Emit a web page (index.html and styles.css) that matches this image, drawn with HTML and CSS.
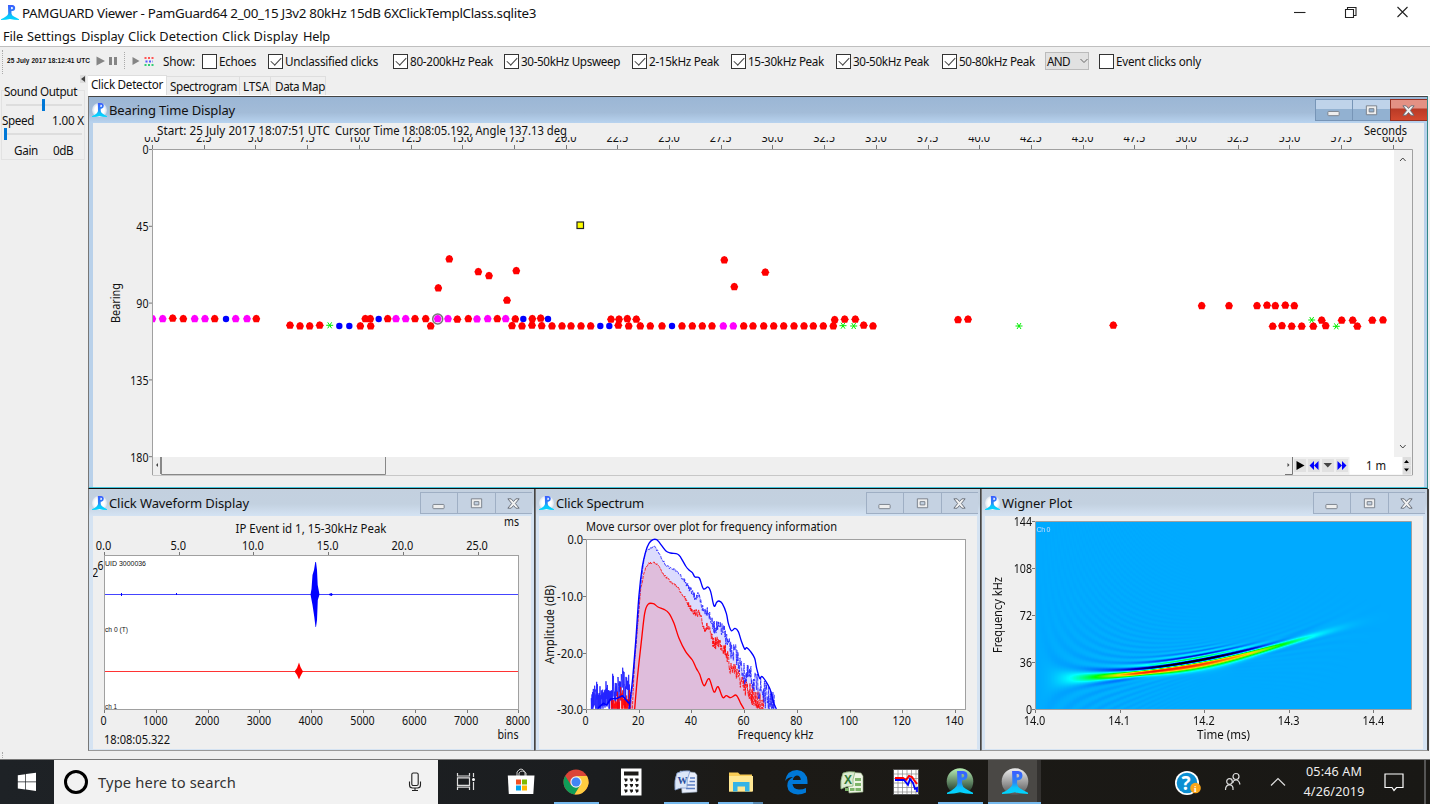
FILE: index.html
```html
<!DOCTYPE html>
<html lang="en">
<head>
<meta charset="utf-8">
<title>PAMGUARD Viewer</title>
<link rel="stylesheet" href="styles.css">
</head>
<body>
<svg class="defs" width="0" height="0" aria-hidden="true">
  <defs>
    <linearGradient id="pg" x1="0" y1="0" x2="0" y2="1"><stop offset="0" stop-color="#3a5cff"/><stop offset=".5" stop-color="#2a86f6"/><stop offset=".72" stop-color="#0cc4fb"/><stop offset="1" stop-color="#00d8ff"/></linearGradient>
    <linearGradient id="greenBall" x1="0" y1="0" x2="0" y2="1"><stop offset="0" stop-color="#b8f0b4"/><stop offset="1" stop-color="#10231a"/></linearGradient>
    <linearGradient id="grayBall" x1="0" y1="0" x2="0" y2="1"><stop offset="0" stop-color="#eee"/><stop offset="1" stop-color="#555"/></linearGradient>
    <symbol id="pam" viewBox="0 0 16 16" preserveAspectRatio="none"><path fill="url(#pg)" fill-rule="evenodd" d="M6.200 0H10Q12.600 .3 12.600 3.200T10 6.500H9.300V9Q9.500 11 11.500 12.300Q13.500 13.600 16 15.200V16Q11.500 15.900 8 14.800Q4.500 15.900 0 16V15.200Q6 12 6.400 9ZM9 2V4.600H9.800Q10.700 4.300 10.600 3.200T9.800 2Z"/></symbol>
    <symbol id="min" viewBox="0 0 16 16"><rect x="2" y="9" width="12" height="4.500" rx=".8" fill="#eee" stroke="#777f89"/></symbol>
    <symbol id="max" viewBox="0 0 16 16"><path fill="#eee" fill-rule="evenodd" stroke="#777f89" d="M2.500 3H13.500V12.500H2.500ZM5.500 6V9.500H10.500V6Z"/></symbol>
    <symbol id="cls" viewBox="0 0 16 16"><path fill="#f2f2f2" stroke="#646b75" stroke-linejoin="round" d="M2 3H5.500L8 5.800L10.500 3H14L10 8L14 13H10.500L8 10.200L5.500 13H2L6 8Z"/></symbol>
  </defs>
</svg>

<header class="titlebar">
  <svg class="app-icon" viewBox="0 0 18 15"><use href="#pam" width="18" height="15"/></svg>
  <span class="app-title" data-w="514">PAMGUARD Viewer - PamGuard64 2_00_15 J3v2 80kHz 15dB 6XClickTemplClass.sqlite3</span>
  <svg class="win-controls" viewBox="0 0 130 24" fill="none" stroke="#222" stroke-width="1.100"><path d="M4 11.500H15.500"/><path d="M55.500 8.500H63.500V16.500H55.500ZM57.500 8V6.500H66V14.500H64"/><path d="M107.500 6L117.500 16M117.500 6L107.500 16"/></svg>
</header>
<nav class="menubar">
  <span data-w="20">File</span><span data-w="49">Settings</span><span data-w="43">Display</span><span data-w="90">Click Detection</span><span data-w="76">Click Display</span><span data-w="27">Help</span>
</nav>

<section class="toolbar">
  <i class="grip"></i>
  <span class="stamp" data-w="83">25 July 2017 18:12:41 UTC</span>
  <svg class="play" viewBox="0 0 80 20"><path fill="#858585" d="M4.500 5.500L13 10L4.500 14.500ZM17 6H20V14H17ZM22 6H25V14H22ZM40.500 6L47.500 10L40.500 14Z"/><path stroke="#aaa" stroke-dasharray="1 1" d="M32.500 1V19"/><g stroke-width="2" stroke-dasharray="2 1.500"><path stroke="#f55" d="M52.500 7H62"/><path stroke="#55f" d="M53.500 10.500H61"/><path stroke="#3c7" d="M52.500 14H62"/></g></svg>
  <span class="show" data-w="32">Show:</span>
  <div class="filters">
    <label><i class="box"></i><span data-w="37">Echoes</span></label>
    <label><i class="box on"></i><span data-w="93">Unclassified clicks</span></label>
    <label><i class="box on"></i><span data-w="83">80-200kHz Peak</span></label>
    <label><i class="box on"></i><span data-w="99">30-50kHz Upsweep</span></label>
    <label><i class="box on"></i><span data-w="70">2-15kHz Peak</span></label>
    <label><i class="box on"></i><span data-w="76">15-30kHz Peak</span></label>
    <label><i class="box on"></i><span data-w="76">30-50kHz Peak</span></label>
    <label><i class="box on"></i><span data-w="76">50-80kHz Peak</span></label>
    <div class="combo"><span data-w="23">AND</span><svg viewBox="0 0 8 6"><path d="M.5 1L4 4.500L7.500 1" fill="none" stroke="#666"/></svg></div>
    <label><i class="box"></i><span data-w="85">Event clicks only</span></label>
  </div>
</section>

<main class="body">
  <aside class="side">
    <svg class="collapse" viewBox="0 0 6 8"><rect width="6" height="8" fill="#ddd"/><path d="M5 1L1 4L5 7Z" fill="#444"/></svg>
    <fieldset class="sound">
      <div class="legend"><span data-w="73">Sound Output</span></div>
      <div class="slider mid"><i></i></div>
      <div class="pair"><span data-w="32">Speed</span><span data-w="32">1.00 X</span></div>
      <div class="slider low"><i></i></div>
      <div class="pair gain"><span data-w="24">Gain</span><span data-w="20">0dB</span></div>
    </fieldset>
  </aside>
  <div class="work">
    <div class="tabs"><span class="tab on"><b data-w="72">Click Detector</b></span><span class="tab t2"><b data-w="67">Spectrogram</b></span><span class="tab t3"><b data-w="26">LTSA</b></span><span class="tab t4"><b data-w="50">Data Map</b></span></div>
    <div class="desktop">
      <section class="frame active">
        <div class="caption"><svg class="cap-icon" viewBox="0 0 15 14"><use href="#pam" width="15" height="14"/></svg><span data-w="126">Bearing Time Display</span><div class="btns"><i><svg><use href="#min"/></svg></i><i><svg><use href="#max"/></svg></i><i class="red"><svg><use href="#cls"/></svg></i></div></div>
        <svg class="plot" id="bearing" viewBox="93 123 1331 364"></svg>
      </section>
      <div class="row">
        <section class="frame">
          <div class="caption"><svg class="cap-icon" viewBox="0 0 15 14"><use href="#pam" width="15" height="14"/></svg><span data-w="140">Click Waveform Display</span><div class="btns"><i><svg><use href="#min"/></svg></i><i><svg><use href="#max"/></svg></i><i><svg><use href="#cls"/></svg></i></div></div>
          <svg class="plot" id="wave" viewBox="93 516 438 233"></svg>
        </section>
        <section class="frame">
          <div class="caption"><svg class="cap-icon" viewBox="0 0 15 14"><use href="#pam" width="15" height="14"/></svg><span data-w="88">Click Spectrum</span><div class="btns"><i><svg><use href="#min"/></svg></i><i><svg><use href="#max"/></svg></i><i><svg><use href="#cls"/></svg></i></div></div>
          <svg class="plot" id="spectrum" viewBox="539 516 438 233"></svg>
        </section>
        <section class="frame last">
          <div class="caption"><svg class="cap-icon" viewBox="0 0 15 14"><use href="#pam" width="15" height="14"/></svg><span data-w="70">Wigner Plot</span><div class="btns"><i><svg><use href="#min"/></svg></i><i><svg><use href="#max"/></svg></i><i><svg><use href="#cls"/></svg></i></div></div>
          <div class="plot wig"><canvas id="wigner" width="376" height="187"></canvas><svg id="wigaxes" viewBox="985 516 438 233"></svg></div>
        </section>
      </div>
    </div>
  </div>
</main>
<div class="status"><i class="grip"></i></div>

<footer class="taskbar">
  <div class="start"><svg viewBox="0 0 20 20"><path fill="#fff" d="M.8 3.300L8.300 2.200V9.500H.8ZM9 2.100L19 .7V9.500H9ZM.8 10.200H8.300V17.500L.8 16.400ZM9 10.200H19V19L9 17.600Z"/></svg></div>
  <div class="search"><i class="ring"></i><span data-w="138">Type here to search</span><svg viewBox="0 0 14 20" fill="none" stroke="#222" stroke-width="1.100"><rect x="3.800" y="1" width="6.400" height="12.500" rx="1.500"/><path d="M1.500 9.500V13Q1.500 16 4.500 16H9.500Q12.500 16 12.500 13V9.500M7 16V18.500M4 18.500H10"/></svg></div>
  <div class="apps">
    <i><svg viewBox="0 0 28 28" fill="none" stroke="#ddd" stroke-width="1.200"><path d="M5.500 5V8H17.500V5M5.500 22V19.200H17.500V22M5.500 9.800H17.500V17.300H5.500ZM21.500 5V9M21.500 14V22"/><circle cx="21.500" cy="11.500" r="1.500" fill="#fff" stroke="none"/></svg></i>
    <i><svg viewBox="0 0 28 28"><path d="M10 8V4Q14 -2 18 4V8M12 8V5Q15 1 19 5V8" fill="none" stroke="#ccc"/><path fill="#fff" d="M.8 7.500H27.500L26.300 26H1.800Z"/><path fill="#f25022" d="M9 11.500H14V16.500H9Z"/><path fill="#7fba00" d="M15 11.500H20V16.500H15Z"/><path fill="#00a4ef" d="M9 17.500H14V22.500H9Z"/><path fill="#ffb900" d="M15 17.500H20V22.500H15Z"/></svg></i>
    <i class="run"><svg viewBox="0 0 28 28"><circle cx="14" cy="14" r="12.500" fill="#db4437"/><path fill="#0f9d58" d="M3.200 7.700A12.500 12.500 0 0 0 12.500 26.400L18.500 17.500 9 17Z"/><path fill="#ffcd40" d="M14 8H25A12.500 12.500 0 0 1 12.500 26.400L19 16Z"/><circle cx="14" cy="14" r="5.700" fill="#f1f1f1"/><circle cx="14" cy="14" r="4.500" fill="#4285f4"/></svg></i>
    <i><svg viewBox="0 0 28 28"><path fill="#fff" d="M4 .5H24.500V27.500H4Z"/><path fill="#1c1a18" d="M7 3.500H21.500V7.500H7Z"/><g fill="#1c1a18"><path id="k" d="M7 10.500H10.500V12.500L8.500 14Z"/><use href="#k" x="5.500"/><use href="#k" x="11"/><use href="#k" y="5.500"/><use href="#k" x="5.500" y="5.500"/><use href="#k" x="11" y="5.500"/><use href="#k" y="11"/><use href="#k" x="5.500" y="11"/><use href="#k" x="11" y="11"/></g></svg></i>
    <i class="run"><svg viewBox="0 0 28 28"><path fill="#e9eefb" stroke="#89a" stroke-width=".6" d="M8 3L23 4.500 25 7V24L10 25Z"/><path stroke="#5b7fc4" stroke-width="1.400" d="M18 10H23M17.500 13.500H23M14 17H23M14 20.500H23"/><path fill="#dce7f8" stroke="#7d99cc" stroke-width=".8" d="M5 5Q12 2 18 3Q14 12 15 20Q9 19 3 22Q2 12 5 5Z"/><text x="5.500" y="15.500" class="word">W</text></svg></i>
    <i class="run two"><svg viewBox="0 0 28 28"><path fill="#f8cc56" d="M2 4.500H11L13 6.500H25V23.500H2Z"/><path fill="#ffe793" d="M2 8H26V23.500H2Z"/><path fill="#35b3e6" d="M6 14H22.500V23.500H18V18.500H10.500V23.500H6Z"/></svg></i>
    <i><svg viewBox="0 0 28 28"><path fill="#0078d7" fill-rule="evenodd" d="M3 13Q5 2 15 2Q25 3 25.500 13V16H10.500Q11 21 17 21.500Q21 21.500 24 20V24.500Q20 26.500 16 26.500Q6 26 5.300 18Q5 12 11 9Q6 9 3 13ZM10.800 12H18.800Q18.500 7.500 14.800 7.500Q11.500 8 10.800 12Z"/></svg></i>
    <i><svg viewBox="0 0 28 28"><path fill="#edf4e4" stroke="#8ba679" stroke-width=".6" d="M9 4L24 5 26 8V24L12 25Z"/><g fill="#7eb46a"><path d="M18 10H24V13H18ZM18 15H24V18H18ZM8 20H12V23H8ZM13 20H17.500V23H13ZM18.500 20H24V23H18.500Z"/></g><path fill="#dcebd1" stroke="#8db27b" stroke-width=".8" d="M6 5Q12 3 18 4Q15 12 16 18Q9 18 4 21Q3 12 6 5Z"/><text x="7" y="16" class="excel">X</text></svg></i>
    <i><svg viewBox="0 0 28 28"><path fill="#fff" stroke="#555" d="M1.500 1.500H26.500V26.500H1.500Z"/><path stroke="#888" stroke-width=".7" d="M6 2V26M10.500 2V26M15 2V26M19.500 2V26M24 2V26M2 6H26M2 10.500H26M2 15H26M2 19.500H26M2 24H26"/><path fill="none" stroke="red" stroke-width="2" d="M3 10L11 10 14 12 17 8 20 9 22 12 25 16"/><path fill="none" stroke="#00f" stroke-width="1.800" d="M3 12L12 12 16 17 18 11 21 15 23 21 25 20V24"/></svg></i>
    <i class="run"><svg viewBox="0 0 28 28"><circle cx="14" cy="13.500" r="13.300" fill="url(#greenBall)"/><use href="#pam" x="1" y="3" width="26" height="23"/></svg></i>
    <i class="run sel"><svg viewBox="0 0 28 28"><circle cx="14" cy="13.500" r="13.300" fill="url(#grayBall)"/><use href="#pam" x="1" y="3" width="26" height="23"/></svg></i>
  </div>
  <div class="tray">
    <svg class="help" viewBox="0 0 28 28"><circle cx="13" cy="13" r="12" fill="#fff"/><circle cx="13" cy="13" r="10.300" fill="#0c8fd2"/><text x="7.500" y="20" class="q">?</text><circle cx="21.500" cy="18" r="5.300" fill="#f9a51a"/><text x="19.900" y="21.500" class="inf">i</text></svg>
    <svg class="people" viewBox="0 0 20 20" fill="none" stroke="#ddd" stroke-width="1.200"><circle cx="13" cy="4.500" r="3"/><path d="M9.800 11Q10 8 13 8T17 12.500"/><circle cx="6.500" cy="9.500" r="2.800"/><path d="M2.500 18Q2.500 12.800 6.500 12.800T10 18"/></svg>
    <svg class="chev" viewBox="0 0 16 10" fill="none" stroke="#ddd" stroke-width="1.200"><path d="M1 8.500L8 1.500L15 8.500"/></svg>
    <div class="clock"><span data-w="56">05:46 AM</span><span data-w="61">4/26/2019</span></div>
    <svg class="note" viewBox="0 0 20 20" fill="none" stroke="#fff" stroke-width="1.200"><path d="M1 2H19V15.500H12.500L10 18.500L8 15.500H1Z"/></svg>
    <i class="peek"></i>
  </div>
</footer>
<script src="plots.js"></script>
</body>
</html>
```
FILE: styles.css
```css
* { box-sizing: border-box; }
body { margin: 0; width: 1430px; height: 804px; overflow: hidden; display: flex; flex-direction: column; background: #efefef; color: #111; font: 11.700px/16px "Noto Sans", sans-serif; }
i, b { font-style: normal; font-weight: normal; }
svg { display: block; overflow: visible; }
span, b { white-space: nowrap; }
.defs { position: absolute; }
.titlebar { height: 26px; flex: none; background: #fff; display: flex; align-items: center; }
.app-icon { width: 18px; height: 15px; margin: 0 3px 2px 1px; }
.app-title { font-size: 13.400px; line-height: 26px; }
.win-controls { width: 130px; height: 24px; margin-left: auto; margin-right: 10px; }
.menubar { height: 21px; flex: none; background: #fff; border-bottom: 1px solid #bfbfbf; padding-left: 3px; display: grid; grid-template-columns: 24px 54px 47px 94px 81px 40px; font-size: 12.800px; line-height: 21px; }

.toolbar { height: 28px; flex: none; display: flex; align-items: center; }
.grip { flex: none; width: 2px; height: 24px; margin: 1px 3px 0 2px; border-left: 1px dotted #aaa; }
.stamp { font: bold 6.500px/16px "Liberation Sans", sans-serif; }
.play { flex: none; width: 80px; height: 20px; margin-left: 2px; margin-right: -9px; }
.show { flex: none; }
.filters { display: grid; margin-left: 7px; grid-template-columns: 66px 125px 111px 128px 99px 105px 106px 103px 54px 110px; align-items: center; }
.filters label { display: flex; align-items: center; gap: 2px; }
.box { width: 15px; height: 15px; background: #fff; border: 1px solid #333; display: flex; justify-content: center; }
.box.on::after { content: ""; width: 9px; height: 5px; margin-top: 2px; border: solid #444; border-width: 0 0 1.200px 1.200px; transform: rotate(-47deg); }
.combo { width: 44px; height: 18px; border: 1px solid #bbb; background: #e1e1e1; display: flex; align-items: center; padding-left: 1px; }
.combo svg { width: 8px; height: 6px; margin-left: 10px; }

.body { flex: none; height: 676px; display: flex; }
.side { width: 88px; display: flex; flex-direction: column; }
.collapse { flex: none; width: 6px; height: 8px; align-self: flex-end; margin-right: 2px; }
.sound { margin: 7px 3px 0 1px; padding: 0; height: 70px; border: 1px solid #e2e2e2; display: block; min-width: 0; }
.legend { height: 8px; padding-left: 2px; }
.legend span { position: relative; top: -8px; background: #efefef; }
.slider { height: 12px; position: relative; margin: 0 2px 0 4px; }
.slider::before { content: ""; position: absolute; left: 0; right: 0; top: 5px; height: 2px; background: #ddd; }
.slider i { position: absolute; top: 0; width: 3px; height: 12px; background: #0078d7; }
.slider.mid i { left: 36px; }
.slider.low i { left: -2px; }
.pair { display: flex; justify-content: space-between; height: 17px; line-height: 18px; }
.pair.gain { padding: 0 11px 0 12px; }
.sound .gain { line-height: 20px; }

.work { width: 1342px; display: flex; flex-direction: column; }
.tabs { height: 21px; display: flex; align-items: flex-end; border-bottom: 1px solid #fff; }
.tab { height: 19px; line-height: 18px; padding-left: 3px; border-top: 1px solid #dedede; border-right: 1px solid #dedede; }
.tab.on { width: 79px; height: 20px; line-height: 17px; background: #fff; }
.t2 { width: 73px; }
.t3 { width: 31px; }
.t4 { width: 55px; padding-left: 4px; }
.desktop { display: flex; flex-direction: column; height: 655px; }
.frame { background: #d5e3f2; border: 1px solid #444; border-left-color: #777; display: flex; flex-direction: column; padding: 0 3px; }
.frame.active { width: 1340px; height: 393px; padding-left: 4px; background: #b9d1ea; border-bottom: 1px solid #111; border-right: 1px solid #388; box-shadow: inset 0 -1px #40c4dc; }
.row { display: flex; height: 262px; width: 1341px; }
.row .frame { width: 446px; height: 262px; border-top-width: 0; border-bottom-color: #999; }
.row .frame.last { width: 448px; border-right-width: 2px; }
.row .frame:first-child { width: 447px; padding-left: 4px; }
.caption { height: 27px; flex: none; margin: 0 -3px; padding: 1px 0 0 3px; display: flex; align-items: center; font-size: 13px; background: linear-gradient(#c3d0df, #c3d1e0 55%, #d4e3f3); }
.active .caption { height: 26px; padding-top: 0; padding-bottom: 1px; background: linear-gradient(#9bb6d5, #a3bcd8 60%, #b8d3ef); }
.active .caption, .row .frame:first-child .caption { margin-left: -4px; }
.cap-icon { flex: none; width: 15px; height: 14px; margin-right: 2px; border-radius: 7px; background: radial-gradient(circle, #fff 45%, #ffffff66 75%); }
.btns { margin-left: auto; display: flex; align-self: flex-start; margin-top: 2px; margin-right: 2px; }
.btns i { width: 37.500px; height: 22px; border: 1px solid #9fafc4; border-right-width: 0; display: grid; place-items: center; background: #c5d2e2; }
.btns svg { width: 15px; height: 15px; }
.active .btns i { background: linear-gradient(#bfd3ea 45%, #92b1d1 46%); border-color: #7795b7; }
.active .btns .red { background: linear-gradient(#e39184 42%, #b83a26 43%, #d3492f); border-color: #963022; }
.active .btns { margin-right: 0; }
.plot { flex: none; width: 438px; height: 233px; background: #efefef; font: 11.800px "Noto Sans", sans-serif; overflow: hidden; }
.active .plot { width: 1331px; height: 364px; }
.wig { display: grid; position: relative; }
#wigner { grid-area: 1/1; margin: 6px 0 0 50px; }
#wigaxes { grid-area: 1/1; width: 438px; height: 233px; }
.small { font: 7px "Liberation Sans", sans-serif; }

.status { height: 8px; flex: none; display: flex; overflow: hidden; }
.taskbar { height: 45px; flex: none; display: flex; background: linear-gradient(90deg, #1e2226, #1b1d1f 42%, #1c1a16 52%, #191815); border-top: 1px solid #777; }
.start { width: 54px; display: grid; place-items: center; }
.start svg { width: 20px; height: 20px; }
.search { width: 384px; background: #f2f2f2; display: flex; align-items: center; color: #333; font-size: 14.700px; padding-left: 10px; }
.ring { width: 24px; height: 24px; border: 3px solid #000; border-radius: 50%; margin-right: 10px; }
.search svg { width: 14px; height: 20px; margin-left: auto; margin-right: 16px; }
.apps { display: flex; margin-left: 1px; }
.apps i { width: 54.900px; height: 44px; display: flex; justify-content: center; align-items: center; position: relative; }
.apps svg { width: 28px; height: 28px; }
.run::after { content: ""; position: absolute; bottom: 0; left: 5px; width: 45px; height: 2px; background: #76b9ed; }
.two::after { background: linear-gradient(90deg, #76b9ed 78%, #5484ac 79%); }
.sel { background: linear-gradient(90deg, #4a4845 49px, #33312f 49px 53px, transparent 53px); }
.sel::after { left: 0; width: 53px; }
.tray { margin-left: auto; display: flex; align-items: center; color: #eee; height: 44px; }
.help { width: 28px; height: 28px; margin-top: 3px; }
.people { width: 20px; height: 20px; margin-left: 21px; }
.chev { width: 16px; height: 10px; margin-left: 27px; }
.clock { display: flex; flex-direction: column; align-items: center; width: 64px; margin-left: 16px; font-size: 12.600px; line-height: 20.500px; }
.note { width: 20px; height: 20px; margin-left: 18px; }
.peek { width: 2px; height: 44px; margin-left: 20px; margin-right: 4px; background: #555; }
.word { font: bold 10px "Liberation Serif", serif; fill: #2a4f9e; }
.excel { font: bold 12px "Liberation Sans", sans-serif; fill: #317a35; }
.q { font: bold 19px "Open Sans", sans-serif; fill: #fff; }
.inf { font: bold 9px "Liberation Serif", serif; fill: #fff; }
```
FILE: plots.js
```js
// Tighten each label's tracking to its stated pixel width.
document.querySelectorAll('[data-w]').forEach(el => {
  el.style.display = 'inline-block';
  el.style.width = 'max-content';
  const natural = el.getBoundingClientRect().width;
  const w = +el.dataset.w;
  el.style.letterSpacing = ((w - natural) / el.textContent.length) + 'px';
  el.style.width = w + 'px';
});

const $ = id => document.getElementById(id);
const tw = s => [...s].reduce((a, c) => a + (c === '.' ? 3.4 : c === '-' ? 4.2 : 6.1), 0);
const txt = (x, y, s, w, anchor, extra) =>
  `<text x="${x}" y="${y}" text-anchor="${anchor || 'start'}" textLength="${w || tw(s)}" lengthAdjust="spacingAndGlyphs" fill="#111" ${extra || ''}>${s}</text>`;
const line = (d, c) => `<path d="${d}" fill="none" stroke="${c || '#a0a0a0'}"/>`;
let seed = 7;
const rnd = () => (seed = (seed * 16807) % 2147483647) / 2147483647;

// Bearing against time
(() => {
  let o = '<clipPath id="c1"><rect x="93" y="137" width="1331" height="10"/></clipPath><clipPath id="c2"><rect x="153" y="150" width="1240" height="306"/></clipPath>';
  o += '<rect x="152" y="150" width="1242" height="307" fill="#fff"/><rect x="1394" y="150" width="18" height="307" fill="#f0f0f0"/>';
  o += txt(157, 134.5, 'Start: 25 July 2017 18:07:51 UTC', 173) + txt(335, 134.5, 'Cursor Time 18:08:05.192, Angle 137.13 deg', 232) + txt(1364, 134.5, 'Seconds', 43);
  let lab = '';
  for (let i = 0; i <= 24; i++) {
    const x = 152 + i * 51.7;
    lab += txt(x, 142.3, (i * 2.5).toFixed(1), 0, 'middle');
    o += line(`M${Math.round(x) + .5} 145V149`, '#777');
  }
  o += `<g clip-path="url(#c1)">${lab}</g>`;
  for (let i = 0; i < 5; i++) {
    o += txt(148.500, 154 + i * 77, String(i * 45), 0, 'end') + line(`M149 ${149.5 + i * 76.8}H152`, '#777');
  }
  o += `<g transform="translate(119.500 323) rotate(-90)">${txt(0, 0, 'Bearing', 40)}</g>`;
  o += line('M152.500 475V149.500H1412.500V475H152.500');
  o += line('M1400 161L1402.800 158L1405.600 161M1400 445L1402.800 448L1405.600 445', '#444');
  const dot = (x, y, k) => {
    const t = `transform="translate(${x.toFixed(1)} ${y.toFixed(1)})"`;
    if (k === 'g') return `<path ${t} stroke="#0e0" stroke-width="1" d="M-3.500 0H3.500M-2 -3L2 3M2 -3L-2 3"/>`;
    if (k === 'b') return `<circle ${t} r="3.200" fill="#00f"/>`;
    return `<path ${t} fill="${k === 'm' ? '#f0f' : 'red'}" d="M-2.500 -3L0 -4L2.500 -3L3.900 0L2.500 3.500H-2.500L-3.900 0Z"/>`;
  };
  const put = (ox, oy, s) => s.trim().split(/\s+/).map(p => {
    const [x, y, k] = p.split(',');
    return dot(ox + x / 3, oy + y / 3, k || 'r');
  }).join('');
  let d = put(88, 240, `193,236,m 224,236,m 254,235 286,236 320,236,m 351,236,m 380,236 414,237,b 443,236,m 477,236,m 505,236
    606,256 636,258 665,258 695,256 725,256,g 754,258,b 784,258,b 817,258 848,258 832,236 847,236 872,237,b 899,236 924,236,m 953,236,m
    981,236 1013,236 1028,258 1049,236,m 1080,236,m 1108,238 1141,236 1167,237,m 1199,236,m 1228,236 1253,236,m 1282,237 1306,237,b
    1333,236 1358,235 1380,237,b 1272,257 1302,258 1332,256 1361,257 1392,258 1422,258
    1084,57 1171,95 1203,107 1285,92 1051,144 1257,181`);
  d += put(560, 210, `33,348 63,348 92,348 121,348,b 148,348,b 175,346 206,348 241,348 271,348 306,348 336,348,b 366,348 397,348 427,348
    456,348 490,348,m 520,348,m 551,348 579,348 611,348 641,348 671,348 702,348 732,348 760,348 790,348 820,348 849,347,g 881,348,g
    911,346 939,348 153,328 177,328 202,326 229,328 824,329 854,328 886,328 1194,329 1224,328 1377,348,g 493,150 616,187 523,230`);
  d += put(1020, 290, `280,106 545,47 627,47 711,47 741,46 766,47 796,46 823,47 875,90,g 905,91 965,91 998,91 1057,91 1089,90
    758,109 786,107 815,109 845,109 880,109 917,107 949,109,g 1012,109`);
  o += `<g clip-path="url(#c2)">${d}</g>`;
  o += '<circle cx="437.700" cy="319" r="5" fill="none" stroke="#777" stroke-width="1.500"/>';
  o += '<rect x="577" y="222" width="6.500" height="6.500" fill="#ff0" stroke="#222" stroke-width="1.200"/>';
  o += '<rect x="153" y="457" width="1259" height="18" fill="#efefef"/>' + line('M161.500 457V474.500H385.500V457M160.500 457V474', '#888');
  o += '<path d="M158 463V467L156 465Z" fill="#444"/><path d="M1287.500 463L1289.500 465L1287.500 467Z" fill="#444"/>' + line('M1292.500 457V474.500H1285', '#777');
  o += '<g fill="#e1e1e1"><rect x="1294" y="459" width="12" height="13"/><rect x="1308" y="459" width="12" height="13"/><rect x="1322" y="459" width="12" height="13"/><rect x="1336" y="459" width="12" height="13"/></g>';
  o += '<path d="M1296.500 461L1304.500 465.500L1296.500 470Z"/><path fill="#444" d="M1323.500 463H1332L1327.800 467.500Z"/>';
  o += '<path fill="#00f" d="M1314 461V470L1309.500 465.500ZM1318.500 461V470L1314 465.500ZM1337.500 461V470L1342 465.500ZM1342 461V470L1346.500 465.500Z"/>';
  o += '<rect x="1349.500" y="457" width="52.500" height="17.500" fill="#fff"/>' + txt(1366, 470, '1 m', 20);
  o += '<rect x="1403" y="457" width="8" height="8.500" fill="#ddd"/><rect x="1403" y="466" width="8" height="8.500" fill="#ddd"/><path d="M1404 463L1406.500 460L1409 463ZM1404 468.500H1409L1406.500 471.500Z"/>';
  $('bearing').innerHTML = o;
})();

// Click waveform
(() => {
  let o = '<rect x="104.500" y="555.500" width="414" height="154" fill="#fff" stroke="#a0a0a0"/>';
  o += txt(235.5, 532.5, 'IP Event id 1, 15-30kHz Peak', 151) + txt(504, 526, 'ms', 15);
  for (let i = 0; i < 6; i++) o += txt(103.5 + i * 74.7, 549.5, (i * 5).toFixed(1), 0, 'middle') + line(`M${Math.round(104 + i * 74.7) + .5} 552V555`, '#777');
  for (let i = 0; i < 9; i++) o += txt(103.5 + i * 51.8, 724.5, String(i * 1000), 0, 'middle') + line(`M${Math.round(104 + i * 51.8) + .5} 710V713`, '#777');
  o += txt(92.3, 576.5, '2', 6) + txt(97.500, 570, '6', 6) + txt(104, 743.5, '18:08:05.322', 66) + txt(497.5, 739, 'bins', 21);
  o += '<g class="small">' + txt(105, 565.5, 'UID 3000036', 41) + txt(105, 631.5, 'ch 0 (T)', 23) + txt(105, 708.5, 'ch 1', 12) + '</g>';
  o += line('M105 594.500H518', '#44f') + line('M105 671.500H518', '#f33');
  o += '<path fill="#00f" d="M310.500 594.500L311.500 589 312.500 575 314 570 315.300 562 316 562 317 570 317.700 585 319.500 594.500 317.800 600 317 620 316 627 315.500 627 314.300 617 312.500 605ZM329 594L331.500 593 333 594.500 331.500 596 329 595ZM121 593h1v3h-1ZM176 593h1v2h-1Z"/>';
  o += '<path fill="red" d="M294.500 671.500L297 668 299 662.500 300.500 667 303 671.500 300.500 676 299 679.500 297 675Z"/>';
  $('wave').innerHTML = o;
})();

// Interpolate along a polyline given as a flat array.
const at = (p, x) => {
  for (let i = 0; i < p.length - 2; i += 2) if (x <= p[i + 2]) return p[i + 1] + (p[i + 3] - p[i + 1]) * Math.max(0, x - p[i]) / (p[i + 2] - p[i]);
  return p[p.length - 1];
};

// Click spectrum, in thirds of a pixel
(() => {
  const blue = [285,672,295,590,305,470,315,330,325,245,335,200,345,175,357,164,368,164,378,175,395,197,410,204,430,207,440,217,455,243,465,255,475,263,483,276,496,279,508,311,522,306,530,320,540,363,548,352,555,348,565,356,577,385,583,415,592,437,603,430,613,440,622,468,632,492,638,488,650,500,662,520,668,550,677,580,683,574,693,585,708,612,718,650,727,672];
  const blueD = [288,672,297,590,307,470,317,330,327,245,335,200,350,187,360,184,372,200,385,225,400,245,420,253,435,265,450,285,465,308,482,335,495,335,508,376,522,376,538,428,550,426,570,440,580,470,592,500,605,505,620,545,632,570,650,575,665,600,680,610,700,640,715,660,722,672];
  const redD = [295,672,302,520,310,430,320,310,335,245,345,235,360,231,372,240,390,270,410,290,430,305,450,335,465,362,480,382,495,385,510,428,522,425,538,475,555,472,575,495,588,548,605,552,628,608,650,620,670,650,690,672];
  const red = [302,672,310,580,322,470,332,385,342,358,358,356,372,366,390,373,405,385,420,415,435,460,455,500,475,525,487,550,497,568,510,602,525,581,540,621,552,605,566,637,577,632,590,638,605,630,613,640,620,655,630,672];
  const P = a => 'M' + a.join(' ');
  // Catmull-Rom through the same points
  const S = a => {
    const n = a.length / 2, q = i => { i = Math.max(0, Math.min(n - 1, i)); return [a[2 * i], a[2 * i + 1]]; };
    let d = `M${a[0]} ${a[1]}`;
    for (let i = 0; i < n - 1; i++) {
      const [p0, p1, p2, p3] = [q(i - 1), q(i), q(i + 1), q(i + 2)];
      d += `C${p1[0] + (p2[0] - p0[0]) / 6} ${p1[1] + (p2[1] - p0[1]) / 6} ${p2[0] - (p3[0] - p1[0]) / 6} ${p2[1] - (p3[1] - p1[1]) / 6} ${p2[0]} ${p2[1]}`;
    }
    return d;
  };
  const noisy = (p, amp) => {
    let d = '';
    for (let x = p[0]; x < p[p.length - 2]; x += x < 450 ? 2 : 1) {
      const k = amp * Math.max(.1, (x - 400) / 290) * 2.2;
      d += (d ? 'L' : 'M') + x.toFixed(1) + ' ' + Math.min(671, at(p, x) + (rnd() - .5) * k).toFixed(1);
    }
    return d;
  };
  const spikes = (x0, x1, base, amp) => {
    let d = `M${x0} 672`;
    for (let x = x0; x < x1; x += 2) {
      const top = base + (x1 - x) * .28 - rnd() * rnd() * amp - (x > 257 && x < 268 ? 22 : 0);
      d += `L${x} ${Math.min(671, top).toFixed(1)}L${x + 1} ${Math.min(671, top + 15 + rnd() * 60).toFixed(1)}`;
    }
    return d;
  };
  let o = '<rect x="586.500" y="539.500" width="379" height="170" fill="#fff" stroke="#a0a0a0"/>';
  o += txt(586, 530.5, 'Move cursor over plot for frequency information', 251);
  ['0.0', '-10.0', '-20.0', '-30.0'].forEach((s, i) => { o += txt(583, 544 + i * 56.8, s, 0, 'end') + line(`M583 ${Math.round(539 + i * 56.8) + .5}H586`, '#777'); });
  for (let i = 0; i < 8; i++) o += txt(585.5 + i * 52.7, 724.500, String(i * 20), 0, 'middle') + line(`M${Math.round(586 + i * 52.7) + .5} 710V713`, '#777');
  o += txt(737.5, 739, 'Frequency kHz', 76) + `<g transform="translate(553.500 664) rotate(-90)">${txt(0, 0, 'Amplitude (dB)', 79)}</g>`;
  o += '<g transform="translate(534 485) scale(.33333)" fill="none" stroke-width="3" stroke-linejoin="bevel">';
  o += `<path fill="#dcdcfd" d="${P(blueD)}Z"/><path fill="#dfbddc" d="${P(redD)}Z"/>`;
  o += `<path stroke="#22f" stroke-width="2.600" d="${spikes(172, 288, 607, 70)}"/><path stroke="red" stroke-width="2" d="${spikes(232, 292, 642, 40)}"/><path stroke="#00f" stroke-width="5" d="M190 671L208 655 218 660 230 642 250 640 265 632 278 647 285 655"/>`;
  o += `<path stroke="red" stroke-width="2.400" stroke-dasharray="10 3" d="${noisy(redD, 34)}"/><path stroke="#22f" stroke-width="2.400" stroke-dasharray="12 3" d="${noisy(blueD, 36)}"/>`;
  o += `<path stroke="red" stroke-width="4" d="${S(red)}"/><path stroke="#00f" stroke-width="4" d="${S(blue)}"/></g>`;
  $('spectrum').innerHTML = o;
})();

// Wigner-Ville distribution of an upsweep chirp
(() => {
  const W = 376, H = 187, T = .444;
  const F = [0,23,.03,23.3,.06,24,.1,25.8,.145,28.2,.18,31,.21,34.3,.24,39.3,.273,45.5,.304,51.7,.336,57.8,.367,64.5,.4,69,.45,76];
  const A = [0,.16,.01,.22,.03,.5,.05,.66,.08,.72,.11,.83,.14,.94,.18,1,.22,.95,.25,.82,.28,.66,.31,.48,.34,.34,.37,.2,.4,.06,.43,.03,.45,.03];
  const soft = (p, t) => { let s = 0; for (let k = -6; k <= 6; k++) s += at(p, Math.max(0, Math.min(.449, t + k * .0025))); return s / 13; };
  const M = 1024, re = new Float64Array(M), im = new Float64Array(M);
  let ph = 0;
  for (let n = 0; n < M; n++) {
    const t = n * T / M;
    ph += 2 * Math.PI * soft(F, t) * T / M;
    const a = soft(A, t);
    re[n] = a * Math.cos(ph); im[n] = a * Math.sin(ph);
  }
  const step = 4, L = M / 2 / step, tau = 2 * step * T / M;
  const out = new Float64Array(W * H);
  let mx = 0;
  for (let c = 0; c < W; c++) {
    const n = Math.round((c + .5) * M / W), kr = [], ki = [];
    for (let k = 0; k < L; k++) {
      const a = n + k * step, b = n - k * step;
      if (a >= M || b < 0) break;
      kr.push(re[a] * re[b] + im[a] * im[b]); ki.push(im[a] * re[b] - re[a] * im[b]);
    }
    for (let r = 0; r < H; r++) {
      const w = 2 * Math.PI * (144 * (H - r - .5) / H) * tau, cw = Math.cos(w), sw = Math.sin(w);
      let s = 0, x = 1, y = 0;
      for (let k = 0; k < kr.length; k++) {
        s += (k ? 2 : 1) * (kr[k] * x + ki[k] * y);
        const nx = x * cw - y * sw; y = x * sw + y * cw; x = nx;
      }
      out[r * W + c] = s;
      if (s > mx) mx = s;
    }
  }
  const stops = [[-.42,0,0,0],[-.2,0,0,200],[-.08,0,100,255],[0,0,170,255],[.13,0,255,255],[.36,0,255,0],[.64,255,215,0],[.85,255,80,0],[1,255,20,0]];
  const ctx = $('wigner').getContext('2d'), img = ctx.createImageData(W, H);
  for (let i = 0; i < W * H; i++) {
    const v = Math.max(-.42, Math.min(1, out[i] / mx));
    let j = 0;
    while (j < stops.length - 2 && v > stops[j + 1][0]) j++;
    const a = stops[j], b = stops[j + 1], f = (v - a[0]) / (b[0] - a[0]);
    for (let k = 0; k < 3; k++) img.data[i * 4 + k] = a[k + 1] + (b[k + 1] - a[k + 1]) * f;
    img.data[i * 4 + 3] = 255;
  }
  ctx.putImageData(img, 0, 0);
  let o = '<path fill="none" stroke="#a0a0a0" d="M1035.500 709.500V521.500H1411.500V709.500Z"/>';
  [144, 108, 72, 36, 0].forEach((v, i) => { o += txt(1032, 526 + i * 47.1, String(v), 0, 'end') + line(`M1032 ${Math.round(521 + i * 47) + .5}H1035`, '#777'); });
  for (let i = 0; i < 5; i++) o += txt(1034.5 + i * 84.7, 724.500, (14 + i / 10).toFixed(1), 0, 'middle') + line(`M${Math.round(1035 + i * 84.6) + .5} 710V713`, '#777');
  o += txt(1197, 739, 'Time (ms)', 53) + `<g transform="translate(1002 653) rotate(-90)">${txt(0, 0, 'Frequency kHz', 76)}</g>`;
  o += '<text class="small" x="1036.500" y="531.500" fill="#cdf" textLength="14">Ch 0</text>';
  $('wigaxes').innerHTML = o;
})();
```
